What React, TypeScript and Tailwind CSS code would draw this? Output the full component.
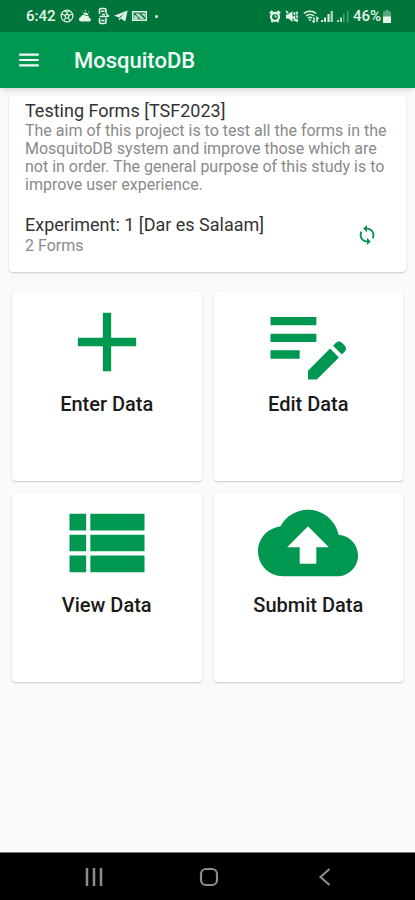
import React from 'react';
import { MdAdd, MdEditNote, MdLoop, MdMenu } from 'react-icons/md';

const ViewListIcon: React.FC = () => (
  <svg viewBox="0 0 24 24" fill="currentColor" className="size-[100px]" aria-hidden="true">
    <path d="M3 14h4v-4H3v4zm0 5h4v-4H3v4zM3 9h4V5H3v4zm5 5h13v-4H8v4zm0 5h13v-4H8v4zM8 5v4h13V5H8z" />
  </svg>
);

const CloudUploadIcon: React.FC = () => (
  <svg viewBox="0 0 24 24" fill="currentColor" className="size-[100px]" aria-hidden="true">
    <path d="M19.35 10.04C18.67 6.59 15.64 4 12 4 9.11 4 6.6 5.64 5.35 8.04 2.34 8.36 0 10.91 0 14c0 3.31 2.69 6 6 6h13c2.76 0 5-2.24 5-5 0-2.64-2.05-4.78-4.65-4.96zM14 13v4h-4v-4H7l5-5 5 5h-3z" />
  </svg>
);

const tiles = [
  { label: 'Enter Data', icon: <MdAdd size={100} /> },
  { label: 'Edit Data', icon: <MdEditNote size={100} /> },
  { label: 'View Data', icon: <ViewListIcon /> },
  { label: 'Submit Data', icon: <CloudUploadIcon /> },
];

const StatusBar: React.FC = () => (
  <div className="flex h-8 items-center justify-between bg-[#00753b] pr-6 pl-[26px] text-[#e4f5e8]">
    <div className="flex items-center gap-1">
      <span className="text-[15px] font-medium">6:42</span>
      {/* football */}
      <svg viewBox="0 0 14 14" className="size-[14px]" fill="none" stroke="currentColor" strokeWidth="1.2">
        <circle cx="7" cy="7" r="5.9" />
        <path d="M7 5 9 6.5 8.3 9H5.7L5 6.5zM7 5V3M9 6.5l3-1.5M8.3 9l1.700 2.400M5.700 9 4 11.400M5 6.500 2 5M4.500 2.200 7 3.200l2.500-1" />
      </svg>
      {/* weather */}
      <svg viewBox="0 0 14 14" className="size-[14px]" fill="currentColor">
        <path d="M3 12.500a2.200 2.200 0 0 1-.5-4.300 3.200 3.200 0 0 1 5.500-1.200 2.800 2.800 0 0 1 3.500 2A1.800 1.800 0 0 1 11.500 12.500z" />
        <path d="M5 5a3 3 0 0 1 5.500 1.500L8 6z" />
        <path d="M7.500 1v1.200M4 2.500l.8.800M11 2.500l-.8.800" stroke="currentColor" strokeWidth="1" />
      </svg>
      {/* phone link */}
      <svg viewBox="0 0 14 18" className="h-[18px] w-[14px]" fill="none" stroke="currentColor" strokeWidth="1.6">
        <path d="M3.500 7V3A1.500 1.500 0 0 1 5 1.500h3.500A1.500 1.500 0 0 1 10 3v3M3.500 11v4A1.500 1.500 0 0 0 5 16.500h3.500A1.500 1.500 0 0 0 10 15v-4" />
        <path d="M5 4.200h3.500M5 13.500h3.500M3.500 9.500H12M6 7.500h3M10 6.500l3 3" />
      </svg>
      {/* paper plane */}
      <svg viewBox="0 0 14 14" className="size-[14px]" fill="currentColor">
        <path d="M13.600 1.500 11.200 12.500 7 9.600 5.200 11.600 4.500 8.300 0 6.800zM10.500 4.200 5.200 8.200l.5 1.300z" fillRule="evenodd" />
      </svg>
      {/* picture message */}
      <svg viewBox="0 0 15 12" className="h-3 w-[15px]" fill="currentColor">
        <path d="M0 1h15v10H0zM1.500 2.500v7h12v-7z" fillRule="evenodd" />
        <path d="M2 9.500V5a6 6 0 0 1 4.500 4.500zM3 3.500h4L12.500 9H8.500zM9 3.500h4v4z" opacity=".8" />
      </svg>
      <span className="ml-1 size-[3px] rounded-full bg-current" />
    </div>
    <div className="flex items-center gap-1">
      {/* alarm */}
      <svg viewBox="0 0 12 13" className="h-[13px] w-3" fill="none" stroke="currentColor">
        <path d="M1 3.500 3.500 1M11 3.500 8.500 1M2.500 12l1-1M9.500 12l-1-1" strokeWidth="2.400" />
        <circle cx="6" cy="6.800" r="4" strokeWidth="2.200" />
        <path d="M6 4.500V7h2" strokeWidth="1" />
      </svg>
      {/* muted */}
      <svg viewBox="0 0 14 13" className="h-[13px] w-[14px]" fill="currentColor">
        <path d="M1 4.500h2.500L7.500 1v11L3.500 8.500H1z" />
        <path d="M1 1l11.500 11M9.500 2v9M12 1.500v10" stroke="currentColor" strokeWidth="1.600" strokeDasharray="3 .8" fill="none" />
      </svg>
      <div className="flex items-center gap-0.5">
        {/* wifi */}
        <svg viewBox="0 0 16 14" className="h-[14px] w-4" fill="none" stroke="currentColor" strokeWidth="1.500">
          <path d="M.8 4.500a9.500 9.500 0 0 1 12.400 0M3 7a6 6 0 0 1 8 0M5 9.200a3 3 0 0 1 4 0" />
          <path d="M7 12v-2M11 8.500v5M9.500 12l1.500 1.500M14 13V8.500l1.500 1.500" />
        </svg>
        {/* signal, first sim */}
        <svg viewBox="0 0 12 12" className="size-3" fill="currentColor">
          <path d="M0 10h2v2H0zM3 7.500h2V12H3zM6.500 4h2v8h-2z" />
          <path d="M9.500 1h2.500v11H9.500z" opacity=".7" />
        </svg>
      </div>
      {/* signal, second sim */}
      <svg viewBox="0 0 12 12" className="size-3" fill="currentColor">
        <path d="M0 10h2v2H0zM3 7.500h2V12H3z" opacity=".8" />
        <path d="M6 4h1.500v8H6zM10 1h1.500v11H10z" opacity=".35" />
      </svg>
      <div className="flex items-center gap-0.5">
        <span className="text-[15px] font-medium">46%</span>
        {/* battery */}
        <svg viewBox="0 0 8 13" className="h-[13px] w-2" fill="currentColor">
          <path d="M2.500 0h3v1.500H8V7H0V1.500h2.500z" opacity=".4" />
          <path d="M0 6.500h8V13H0z" />
        </svg>
      </div>
    </div>
  </div>
);

const NavBar: React.FC = () => (
  <nav className="flex h-12 items-center justify-around border-t border-[#777] bg-black pr-8 pl-9 text-[#8c8c8c]">
    <button aria-label="Recent apps" className="flex w-16 justify-center">
      <svg viewBox="0 0 18 18" className="size-[18px]" stroke="currentColor" strokeWidth="2.500">
        <path d="M2 0v18M9 0v18M16 0v18" />
      </svg>
    </button>
    <button aria-label="Home" className="flex w-16 justify-center">
      <svg viewBox="0 0 20 20" className="size-5" fill="none" stroke="currentColor" strokeWidth="2.200">
        <rect x="2" y="2" width="16" height="16" rx="5" />
      </svg>
    </button>
    <button aria-label="Back" className="flex w-16 justify-center">
      <svg viewBox="0 0 18 18" className="size-[18px]" fill="none" stroke="currentColor" strokeWidth="2.200">
        <path d="M13.500 1 4.500 9l9 8" />
      </svg>
    </button>
  </nav>
);

const App: React.FC = () => {
  return (
    <div className="flex min-h-screen flex-col bg-[#fafafa] font-[Roboto,sans-serif]">
      <StatusBar />
      <header className="z-10 flex h-14 items-center gap-8 bg-[#009851] px-4 text-[#f2fbf5] shadow-md">
        <button aria-label="Menu">
          <MdMenu size={26} />
        </button>
        <h1 className="text-[22px] font-medium">MosquitoDB</h1>
      </header>

      <main className="flex-1">
        <section className="mx-[9px] mt-2 rounded bg-white px-4 pt-1 pb-4 shadow-[0_1px_2px_rgba(0,0,0,0.2)]">
          <h2 className="text-lg leading-[22px] text-[#333]">Testing Forms [TSF2023]</h2>
          <p className="text-base leading-[18px] text-[#8a8a8a]">
            The aim of this project is to test all the forms in the MosquitoDB system and improve those which are
            not in order. The general purpose of this study is to improve user experience.
          </p>
          <div className="mt-5 flex items-center justify-between">
            <div>
              <h3 className="text-lg leading-[22px] text-[#333]">Experiment: 1 [Dar es Salaam]</h3>
              <p className="text-base leading-5 text-[#8a8a8a]">2 Forms</p>
            </div>
            <button aria-label="Sync" className="mr-3 text-[#009347]">
              <MdLoop size={22} />
            </button>
          </div>
        </section>

        <div className="mx-3 mt-5 grid grid-cols-2 gap-3">
          {tiles.map((tile) => (
            <button
              key={tile.label}
              className="flex h-[189px] flex-col items-center rounded-sm bg-white text-[#009851] shadow-[0_1px_2px_rgba(0,0,0,0.2)]"
            >
              {tile.icon}
              <span className="text-xl leading-6 font-medium text-[#1a1a1a]">{tile.label}</span>
            </button>
          ))}
        </div>
      </main>

      <NavBar />
    </div>
  );
};

export default App;
